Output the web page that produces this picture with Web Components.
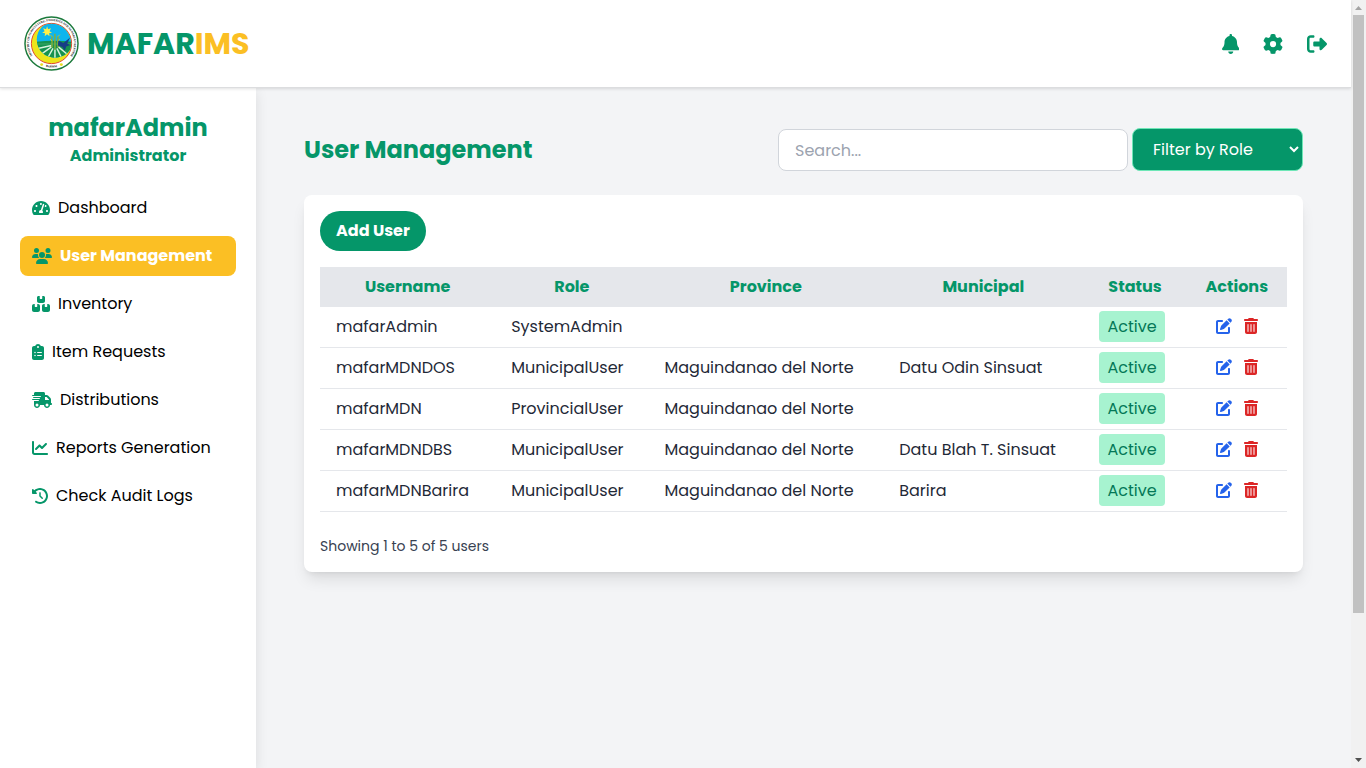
<!DOCTYPE html>
<html lang="en">
<head>
<meta charset="utf-8">
<meta name="viewport" content="width=device-width, initial-scale=1">
<title>MAFARIMS - User Management</title>
<style>
  :root {
    --green: #059669;
    --amber: #fbbf24;
    --page: #f3f4f6;
    --line: #e5e7eb;
  }
  body {
    margin: 0;
    background: var(--page);
    color: #000;
    font-family: Poppins, "Open Sans", sans-serif;
    font-size: 16px;
    line-height: 24px;
  }
</style>
</head>
<body>
<app-shell>
  <site-header slot="header"></site-header>
  <side-nav slot="side" name="mafarAdmin" role-name="Administrator">
    <nav-item icon="gauge">Dashboard</nav-item>
    <nav-item icon="users" active>User Management</nav-item>
    <nav-item icon="boxes">Inventory</nav-item>
    <nav-item icon="clipboard">Item Requests</nav-item>
    <nav-item icon="truck">Distributions</nav-item>
    <nav-item icon="chart">Reports Generation</nav-item>
    <nav-item icon="history">Check Audit Logs</nav-item>
  </side-nav>
  <page-toolbar>User Management</page-toolbar>
  <user-card></user-card>
  <scroll-track slot="scroll" aria-hidden="true"></scroll-track>
</app-shell>

<script>
const ICONS = {
  bell: [448, 'M224 0c-17.7 0-32 14.3-32 32V51.2C119 66 64 130.6 64 208v18.8c0 47-17.3 92.4-48.5 127.6l-7.4 8.3c-8.4 9.4-10.4 22.9-5.3 34.4S19.4 416 32 416H416c12.6 0 24-7.4 29.2-18.9s3.1-25-5.3-34.4l-7.4-8.3C401.3 319.2 384 273.9 384 226.8V208c0-77.4-55-142-128-156.8V32c0-17.7-14.3-32-32-32zm45.3 493.3c12-12 18.7-28.3 18.7-45.3H224 160c0 17 6.7 33.3 18.7 45.3s28.3 18.7 45.3 18.7s33.3-6.7 45.3-18.7z'],
  gear: [512, 'M495.9 166.6c3.2 8.7 .5 18.4-6.4 24.6l-43.3 39.4c1.1 8.3 1.7 16.8 1.7 25.4s-.6 17.1-1.7 25.4l43.3 39.4c6.9 6.2 9.6 15.9 6.4 24.6c-4.4 11.9-9.7 23.3-15.8 34.3l-4.7 8.1c-6.6 11-14 21.4-22.1 31.2c-5.9 7.2-15.7 9.6-24.5 6.8l-55.7-17.7c-13.4 10.3-28.2 18.9-44 25.4l-12.5 57.1c-2 9.1-9 16.3-18.2 17.8c-13.8 2.3-28 3.5-42.5 3.5s-28.7-1.2-42.5-3.5c-9.2-1.5-16.2-8.7-18.2-17.8l-12.5-57.1c-15.8-6.5-30.6-15.1-44-25.4L83.1 425.9c-8.8 2.8-18.6 .3-24.5-6.8c-8.1-9.8-15.5-20.2-22.1-31.2l-4.7-8.1c-6.1-11-11.4-22.4-15.8-34.3c-3.2-8.7-.5-18.4 6.4-24.6l43.3-39.4C64.6 273.1 64 264.6 64 256s.6-17.1 1.7-25.4L22.4 191.2c-6.9-6.2-9.6-15.9-6.4-24.6c4.4-11.9 9.7-23.3 15.8-34.3l4.7-8.1c6.6-11 14-21.4 22.1-31.2c5.9-7.2 15.7-9.6 24.5-6.8l55.7 17.7c13.4-10.3 28.2-18.9 44-25.4l12.5-57.1c2-9.1 9-16.3 18.2-17.8C227.3 1.2 241.5 0 256 0s28.7 1.2 42.5 3.5c9.2 1.5 16.2 8.7 18.2 17.8l12.5 57.1c15.8 6.5 30.6 15.1 44 25.4l55.7-17.7c8.8-2.8 18.6-.3 24.5 6.8c8.1 9.8 15.5 20.2 22.1 31.2l4.7 8.1c6.1 11 11.4 22.4 15.8 34.3zM256 336a80 80 0 1 0 0-160 80 80 0 1 0 0 160z'],
  logout: [512, 'M377.9 105.9L500.7 228.7c7.2 7.2 11.3 17.1 11.3 27.3s-4.1 20.1-11.3 27.3L377.9 406.1c-6.4 6.4-15 9.9-24 9.9c-18.7 0-33.9-15.2-33.9-33.9l0-62.1-128 0c-17.7 0-32-14.3-32-32l0-64c0-17.7 14.3-32 32-32l128 0 0-62.1c0-18.7 15.2-33.9 33.9-33.9c9 0 17.6 3.6 24 9.9zM160 96L96 96c-17.7 0-32 14.3-32 32l0 256c0 17.7 14.3 32 32 32l64 0c17.7 0 32 14.3 32 32s-14.3 32-32 32l-64 0c-53 0-96-43-96-96L0 128C0 75 43 32 96 32l64 0c17.7 0 32 14.3 32 32s-14.3 32-32 32z'],
  gauge: [576, 'M288 32C128.94 32 0 160.94 0 320c0 52.8 14.25 102.26 39.06 144.8 5.61 9.62 16.3 15.2 27.44 15.2h443c11.14 0 21.83-5.58 27.44-15.2C561.75 422.26 576 372.8 576 320c0-159.06-128.94-288-288-288zm0 64c14.71 0 26.58 10.13 30.32 23.65-1.11 2.26-2.64 4.23-3.45 6.67l-9.22 27.67c-5.13 3.49-10.97 6.01-17.64 6.01-17.67 0-32-14.33-32-32S270.33 96 288 96zM96 384c-17.67 0-32-14.33-32-32s14.33-32 32-32 32 14.33 32 32-14.33 32-32 32zm48-160c-17.67 0-32-14.33-32-32s14.33-32 32-32 32 14.33 32 32-14.33 32-32 32zm246.77-72.41l-61.33 184C343.13 347.33 352 364.54 352 384c0 11.72-3.38 22.55-8.88 32H232.88c-5.5-9.45-8.88-20.28-8.88-32 0-33.94 26.5-61.43 59.9-63.59l61.34-184.01c4.17-12.56 17.73-19.45 30.36-15.17 12.57 4.19 19.35 17.79 15.17 30.36zm14.66 57.2l15.52-46.55c3.47-1.29 7.13-2.23 11.05-2.23 17.67 0 32 14.33 32 32s-14.33 32-32 32c-11.38-.01-20.89-6.28-26.57-15.22zM480 384c-17.67 0-32-14.33-32-32s14.33-32 32-32 32 14.33 32 32-14.33 32-32 32z'],
  users: [640, 'M144 0a80 80 0 1 1 0 160A80 80 0 1 1 144 0zM512 0a80 80 0 1 1 0 160A80 80 0 1 1 512 0zM0 298.7C0 239.8 47.8 192 106.7 192h42.7c15.9 0 31 3.5 44.6 9.7c-1.3 7.2-1.9 14.7-1.9 22.3c0 38.2 16.8 72.5 43.3 96c-.2 0-.4 0-.7 0H21.3C9.6 320 0 310.4 0 298.7zM405.3 320c-.2 0-.4 0-.7 0c26.6-23.5 43.3-57.8 43.3-96c0-7.6-.7-15-1.9-22.3c13.6-6.3 28.7-9.7 44.6-9.7h42.7C592.2 192 640 239.8 640 298.7c0 11.8-9.6 21.3-21.3 21.3H405.3zM224 224a96 96 0 1 1 192 0 96 96 0 1 1 -192 0zM128 485.3C128 411.7 187.7 352 261.3 352H378.7C452.3 352 512 411.7 512 485.3c0 14.7-11.9 26.7-26.7 26.7H154.7c-14.7 0-26.7-11.9-26.7-26.7z'],
  boxes: [576, 'M248 0H208c-26.5 0-48 21.5-48 48V160c0 35.3 28.7 64 64 64H352c35.3 0 64-28.7 64-64V48c0-26.5-21.5-48-48-48H328V80c0 8.8-7.2 16-16 16H264c-8.8 0-16-7.2-16-16V0zM64 256c-35.3 0-64 28.7-64 64V448c0 35.3 28.7 64 64 64H192c35.3 0 64-28.7 64-64V320c0-35.3-28.7-64-64-64H168v80c0 8.8-7.2 16-16 16H104c-8.8 0-16-7.2-16-16V256H64zM384 512H512c35.3 0 64-28.7 64-64V320c0-35.3-28.7-64-64-64H488v80c0 8.8-7.2 16-16 16H424c-8.8 0-16-7.2-16-16V256H384c-35.3 0-64 28.7-64 64V448c0 35.3 28.7 64 64 64z'],
  clipboard: [384, 'M192 0c-41.8 0-77.4 26.7-90.5 64H64C28.7 64 0 92.7 0 128V448c0 35.3 28.7 64 64 64H320c35.3 0 64-28.7 64-64V128c0-35.3-28.7-64-64-64H282.5C269.4 26.7 233.8 0 192 0zm0 64a32 32 0 1 1 0 64 32 32 0 1 1 0-64zM72 272a24 24 0 1 1 48 0 24 24 0 1 1 -48 0zm104-16H304c8.8 0 16 7.2 16 16s-7.2 16-16 16H176c-8.8 0-16-7.2-16-16s7.2-16 16-16zM72 368a24 24 0 1 1 48 0 24 24 0 1 1 -48 0zm88 0c0-8.8 7.2-16 16-16H304c8.8 0 16 7.2 16 16s-7.2 16-16 16H176c-8.8 0-16-7.2-16-16z'],
  truck: [640, 'M112 0C85.5 0 64 21.5 64 48V96H16c-8.8 0-16 7.2-16 16s7.2 16 16 16H64 272c8.8 0 16 7.2 16 16s-7.2 16-16 16H64 48c-8.8 0-16 7.2-16 16s7.2 16 16 16H64 240c8.8 0 16 7.2 16 16s-7.2 16-16 16H64 16c-8.8 0-16 7.2-16 16s7.2 16 16 16H64 208c8.8 0 16 7.2 16 16s-7.2 16-16 16H64V416c0 53 43 96 96 96s96-43 96-96H384c0 53 43 96 96 96s96-43 96-96h32c17.7 0 32-14.3 32-32s-14.3-32-32-32V288 256 237.3c0-17-6.7-33.3-18.7-45.3L512 114.7c-12-12-28.3-18.7-45.3-18.7H416V48c0-26.5-21.5-48-48-48H112zM544 237.3V256H416V160h50.7L544 237.3zM160 368a48 48 0 1 1 0 96 48 48 0 1 1 0-96zm272 48a48 48 0 1 1 96 0 48 48 0 1 1 -96 0z'],
  chart: [512, 'M64 64c0-17.7-14.3-32-32-32S0 46.3 0 64V400c0 44.2 35.8 80 80 80H480c17.7 0 32-14.3 32-32s-14.3-32-32-32H80c-8.8 0-16-7.2-16-16V64zm406.6 86.6c12.5-12.5 12.5-32.8 0-45.3s-32.8-12.5-45.3 0L320 210.7l-57.4-57.4c-12.5-12.5-32.8-12.5-45.3 0l-112 112c-12.5 12.5-12.5 32.8 0 45.3s32.8 12.5 45.3 0L240 221.3l57.4 57.4c12.5 12.5 32.8 12.5 45.3 0l128-128z'],
  history: [512, 'M75 75L41 41C25.9 25.9 0 36.6 0 57.9V168c0 13.3 10.7 24 24 24H134.1c21.4 0 32.1-25.9 17-41l-30.8-30.8C155 85.5 203 64 256 64c106 0 192 86 192 192s-86 192-192 192c-40.8 0-78.6-12.7-109.7-34.4c-14.5-10.1-34.4-6.6-44.6 7.9s-6.6 34.4 7.9 44.6C151.2 495 201.7 512 256 512c141.4 0 256-114.6 256-256S397.4 0 256 0C185.3 0 121.3 28.7 75 75zm181 53c-13.3 0-24 10.7-24 24V256c0 6.4 2.5 12.5 7 17l72 72c9.4 9.4 24.6 9.4 33.9 0s9.4-24.6 0-33.9l-65-65V152c0-13.3-10.7-24-24-24z'],
  edit: [512, 'M471.6 21.7c-21.9-21.9-57.3-21.9-79.2 0L362.3 51.7l97.9 97.9 30.1-30.1c21.9-21.9 21.9-57.3 0-79.2L471.6 21.7zm-299.2 220c-6.1 6.1-10.8 13.6-13.5 21.9l-29.6 88.8c-2.9 8.6-.6 18.1 5.8 24.6s15.9 8.7 24.6 5.8l88.8-29.6c8.2-2.7 15.7-7.4 21.9-13.5L437.7 172.3 339.7 74.3 172.4 241.7zM64 64C28 64 0 92 0 128V448c0 36 28 64 64 64H384c36 0 64-28 64-64V320c0-17.7-14.3-32-32-32s-32 14.3-32 32v128H64V128H192c17.7 0 32-14.3 32-32s-14.3-32-32-32H64z'],
  trash: [448, 'M135.2 17.7C140.6 6.8 151.7 0 163.8 0H284.2c12.1 0 23.2 6.8 28.6 17.7L320 32h96c17.7 0 32 14.3 32 32s-14.3 32-32 32H32C14.3 96 0 81.7 0 64S14.3 32 32 32h96l7.2-14.3zM32 128H416V448c0 35.3-28.7 64-64 64H96c-35.3 0-64-28.7-64-64V128zm96 64c-8.8 0-16 7.2-16 16V432c0 8.8 7.2 16 16 16s16-7.2 16-16V208c0-8.8-7.2-16-16-16zm96 0c-8.8 0-16 7.2-16 16V432c0 8.8 7.2 16 16 16s16-7.2 16-16V208c0-8.8-7.2-16-16-16zm96 0c-8.8 0-16 7.2-16 16V432c0 8.8 7.2 16 16 16s16-7.2 16-16V208c0-8.8-7.2-16-16-16z']
};

const define = (name, render) => customElements.define(name, class extends HTMLElement {
  connectedCallback() {
    if (this.shadowRoot) return;
    this.attachShadow({ mode: 'open' }).innerHTML = render(this);
  }
});

define('ui-icon', el => {
  const [width, path] = ICONS[el.getAttribute('name')];
  return `
  <style>
    :host { display: block; flex: none; }
    svg { display: block; height: var(--icon-size, 16px); fill: currentColor; }
  </style>
  <svg viewBox="0 0 ${width} 512" aria-hidden="true"><path d="${path}"/></svg>`;
});

define('app-shell', () => `
  <style>
    :host {
      display: grid;
      grid-template-columns: 256px minmax(0, 1fr) 15px;
      grid-template-rows: auto minmax(0, 1fr);
      height: 100vh;
      overflow: hidden;
    }
    slot { display: block; }
    slot[name=header] { grid-column: 1 / 3; z-index: 2; }
    slot[name=side] { grid-row: 2; z-index: 1; }
    main { grid-row: 2; grid-column: 2; padding: 40px 48px; overflow: hidden; }
    slot[name=scroll] { grid-row: 1 / 3; grid-column: 3; }
  </style>
  <slot name="header"></slot>
  <slot name="side"></slot>
  <main><slot></slot></main>
  <slot name="scroll"></slot>`);

define('agency-seal', () => `
  <style>
    :host { display: block; flex: none; }
    svg { display: block; width: 55px; height: 55px; overflow: visible; }
    text { font: 700 6px "Liberation Serif", serif; fill: #111; }
  </style>
  <svg viewBox="0 0 112 112" role="img" aria-label="Agency seal">
    <defs>
      <clipPath id="disc"><circle cx="56" cy="56" r="40"/></clipPath>
      <clipPath id="scene"><circle cx="63" cy="48" r="37"/></clipPath>
      <path id="ring" d="M25 90A46 46 0 1 1 87 90"/>
      <path id="foot" d="M36 101Q56 109 76 101"/>
    </defs>
    <circle cx="56" cy="56" r="54" fill="#fff" stroke="#1c7a3c" stroke-width="3"/>
    <circle cx="56" cy="56" r="41" fill="#ece51b" stroke="#e0472f" stroke-width="2"/>
    <g clip-path="url(#disc)"><g clip-path="url(#scene)">
      <rect width="112" height="112" fill="#0db5ee"/>
      <path d="M20 53Q62 48 104 53V96H20z" fill="#17924f"/>
      <g stroke="#d9f3dc" stroke-width="3" fill="none">
        <path d="M56 60L28 66M56 63L36 77M59 66L49 84M63 68V88M67 66L76 84M70 63L88 78"/>
        <path d="M26 57H98" stroke="#5fbf7f" stroke-width="1"/>
      </g>
      <g stroke="#86ad3c" stroke-width="3" fill="none">
        <path d="M63 68V36M57 64V41M69 64V41"/>
        <path d="M53 38l4 4M53 47l4 4M73 38l-4 4M73 47l-4 4" stroke="#c8c32c" stroke-width="2"/>
      </g>
      <path d="M70 50l10 5 14-11-6 12 6 3-8 3-3 9-5-8-9-3z" fill="#173d86"/>
    </g></g>
    <path d="M47 21l2 6 6-2-3 6 5 3-6 1 1 6-5-4-5 4 1-6-6-1 5-3-3-6 6 2z" fill="#fff047"/>
    <text text-anchor="middle"><textPath href="#ring" startOffset="50%">MINISTRY OF AGRICULTURE, FISHERIES AND AGRARIAN REFORM</textPath></text>
    <text text-anchor="middle"><textPath href="#foot" startOffset="50%">BARMM</textPath></text>
    <circle cx="36" cy="99" r="3" fill="#e8dc20"/><circle cx="76" cy="99" r="3" fill="#e8dc20"/>
  </svg>`);

define('site-header', () => `
  <style>
    :host { display: block; }
    header {
      display: flex; align-items: center; justify-content: space-between;
      box-sizing: border-box; height: 88px; padding: 0 24px;
      background: #fff; border-bottom: 1px solid #dcdddf;
      box-shadow: 0 1px 3px rgb(0 0 0 / .12);
    }
    .brand { display: flex; align-items: center; gap: 8px; font-size: 30px; line-height: 36px; font-weight: 700; color: var(--green); text-decoration: none; }
    .brand b { font-weight: 700; color: var(--amber); }
    nav { display: flex; gap: 24px; color: var(--green); --icon-size: 20px; }
    button { display: block; padding: 0; border: 0; background: none; color: inherit; cursor: pointer; }
  </style>
  <header>
    <a class="brand" href="#home"><agency-seal></agency-seal><span>MAFAR<b>IMS</b></span></a>
    <nav>
      <button aria-label="Notifications"><ui-icon name="bell"></ui-icon></button>
      <button aria-label="Settings"><ui-icon name="gear"></ui-icon></button>
      <button aria-label="Log out"><ui-icon name="logout"></ui-icon></button>
    </nav>
  </header>`);

define('side-nav', el => `
  <style>
    :host { display: block; height: 100%; }
    aside {
      box-sizing: border-box; height: 100%; padding: 24px 20px;
      background: #fff; box-shadow: 0 4px 12px rgb(0 0 0 / .1);
    }
    .who { margin-bottom: 20px; text-align: center; color: var(--green); font-weight: 700; }
    h2 { margin: 0; font-size: 24px; line-height: 32px; font-weight: 700; }
    p { margin: 0; }
    nav { display: grid; gap: 8px; }
  </style>
  <aside>
    <div class="who"><h2>${el.getAttribute('name')}</h2><p>${el.getAttribute('role-name')}</p></div>
    <nav><slot></slot></nav>
  </aside>`);

define('nav-item', el => `
  <style>
    :host { display: block; }
    a { display: flex; align-items: center; gap: 8px; padding: 8px 12px; border-radius: 8px; color: #000; text-decoration: none; }
    ui-icon { color: var(--green); }
    :host([active]) a { background: var(--amber); color: #fff; font-weight: 700; }
  </style>
  <a href="#${el.getAttribute('icon')}"><ui-icon name="${el.getAttribute('icon')}"></ui-icon><span><slot></slot></span></a>`);

define('page-toolbar', () => `
  <style>
    :host { display: flex; align-items: center; justify-content: space-between; margin-bottom: 24px; }
    h1 { margin: 0; font-size: 24px; line-height: 32px; font-weight: 700; color: var(--green); }
    form { display: flex; align-items: flex-end; gap: 4px; }
    input, select { box-sizing: border-box; margin: 0; border: 1px solid; border-radius: 8px; font: inherit; }
    input { width: 350px; height: 42px; padding: 8px 16px; border-color: #d1d5db; background: #fff; color: #000; }
    input::placeholder { color: #9ca3af; opacity: 1; }
    select { width: 171px; height: 43px; padding: 8px 0 8px 16px; border-color: #6ee7b7; background: var(--green); color: #fff; }
  </style>
  <h1><slot></slot></h1>
  <form>
    <input type="text" placeholder="Search..." aria-label="Search users">
    <select aria-label="Filter by role">
      <option>Filter by Role</option><option>SystemAdmin</option><option>ProvincialUser</option><option>MunicipalUser</option>
    </select>
  </form>`);

define('status-badge', () => `
  <style>
    :host { display: inline; padding: 4px 8px; border-radius: 4px; background: #a7f3d0; color: #047857; }
  </style><slot></slot>`);

const USERS = [
  ['mafarAdmin', 'SystemAdmin', '', ''],
  ['mafarMDNDOS', 'MunicipalUser', 'Maguindanao del Norte', 'Datu Odin Sinsuat'],
  ['mafarMDN', 'ProvincialUser', 'Maguindanao del Norte', ''],
  ['mafarMDNDBS', 'MunicipalUser', 'Maguindanao del Norte', 'Datu Blah T. Sinsuat'],
  ['mafarMDNBarira', 'MunicipalUser', 'Maguindanao del Norte', 'Barira']
];

define('user-card', () => `
  <style>
    :host {
      display: block; padding: 16px; border-radius: 8px; background: #fff;
      box-shadow: 0 10px 15px -3px rgb(0 0 0 / .1), 0 4px 6px -4px rgb(0 0 0 / .1);
    }
    .add {
      display: block; margin: 0 0 16px; padding: 8px 16px; border: 0; border-radius: 20px;
      background: var(--green); color: #fff; font: inherit; font-weight: 700; cursor: pointer;
    }
    table { width: 100%; border-collapse: collapse; color: #1f2937; }
    th, td { padding: 8px 16px; white-space: nowrap; vertical-align: top; }
    th { background: var(--line); color: var(--green); font-weight: 700; text-align: center; }
    tbody tr { border-bottom: 1px solid var(--line); }
    .actions { display: flex; align-items: center; justify-content: center; gap: 12px; height: 22px; }
    .actions button { display: block; padding: 0; border: 0; background: none; cursor: pointer; }
    .actions .edit { color: #2563eb; }
    .actions .delete { color: #dc2626; }
    p { margin: 24px 0 0; font-size: 14px; line-height: 20px; color: #374151; }
  </style>
  <button class="add">Add User</button>
  <table>
    <thead><tr>${['Username', 'Role', 'Province', 'Municipal', 'Status', 'Actions'].map(h => `<th scope="col">${h}</th>`).join('')}</tr></thead>
    <tbody>${USERS.map(user => `<tr>${user.map(v => `<td>${v}</td>`).join('')}
      <td><status-badge>Active</status-badge></td>
      <td><div class="actions">
        <button class="edit" aria-label="Edit ${user[0]}"><ui-icon name="edit"></ui-icon></button>
        <button class="delete" aria-label="Delete ${user[0]}"><ui-icon name="trash"></ui-icon></button>
      </div></td></tr>`).join('')}</tbody>
  </table>
  <p>Showing 1 to 5 of 5 users</p>`);

define('scroll-track', () => `
  <style>
    :host { display: flex; flex-direction: column; height: 100%; background: #f1f1f1; }
    svg { display: block; flex: none; width: 15px; height: 15px; }
    .thumb { flex: 598; margin: 0 2px; background: #c1c1c1; }
    .rest { flex: 140; }
  </style>
  <svg viewBox="0 0 15 15"><path d="M4 10h7L7.500 6z" fill="#a3a3a3"/></svg>
  <div class="thumb"></div><div class="rest"></div>
  <svg viewBox="0 0 15 15"><path d="M4 5h7L7.500 9z" fill="#505050"/></svg>`);
</script>
</body>
</html>
